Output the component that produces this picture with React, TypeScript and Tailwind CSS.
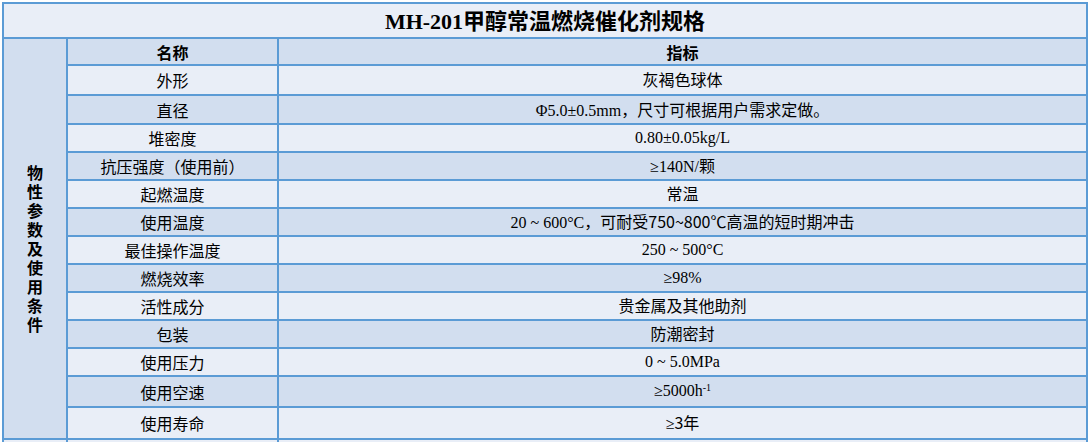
import React from "react";

const sans = "font-['Noto_Sans_CJK_SC','Noto_Sans',sans-serif]";
const serif = "font-['Liberation_Serif','Noto_Sans_CJK_SC',serif]";

type Row = { name: string; value: React.ReactNode; h: string };

const rows: Row[] = [
  { name: "外形", value: <span className={sans}>灰褐色球体</span>, h: "h-[30px]" },
  { name: "直径", value: <>Φ5.0±0.5mm<span className={sans}>，尺寸可根据用户需求定做。</span></>, h: "h-[29px]" },
  { name: "堆密度", value: "0.80±0.05kg/L", h: "h-[28px]" },
  { name: "抗压强度（使用前）", value: <>≥140N/<span className={sans}>颗</span></>, h: "h-[28px]" },
  { name: "起燃温度", value: <span className={sans}>常温</span>, h: "h-[28px]" },
  {
    name: "使用温度",
    value: (
      <>
        20 ~ 600°C<span className={sans}>，可耐受750~800℃高温的短时期冲击</span>
      </>
    ),
    h: "h-[28px]",
  },
  { name: "最佳操作温度", value: "250 ~ 500°C", h: "h-[28px]" },
  { name: "燃烧效率", value: "≥98%", h: "h-[28px]" },
  { name: "活性成分", value: <span className={sans}>贵金属及其他助剂</span>, h: "h-[28px]" },
  { name: "包装", value: <span className={sans}>防潮密封</span>, h: "h-[28px]" },
  { name: "使用压力", value: "0 ~ 5.0MPa", h: "h-[28px]" },
  {
    name: "使用空速",
    value: (
      <>
        ≥5000h<span className="relative -top-[5px] text-[10px]">-1</span>
      </>
    ),
    h: "h-[31px]",
  },
  {
    name: "使用寿命",
    value: (
      <>
        ≥<span className={sans}>3年</span>
      </>
    ),
    h: "h-[32px]",
  },
];

const cell = "border-2 border-[#5b9bd5] text-center align-middle p-0";

export default function App() {
  return (
    <div className="w-[1090px] h-[442px] overflow-hidden bg-white pl-[2px] pt-[2px]">
      <table className="w-[1086px] table-fixed border-collapse text-[16px] leading-[20px] text-black">
        <colgroup>
          <col className="w-[64px]" />
          <col className="w-[211px]" />
          <col />
        </colgroup>
        <tbody>
          <tr className="h-[35px] bg-[#e9eef7]">
            <td colSpan={3} className={`${cell} text-[22px] font-bold`}>
              <span className="font-['Liberation_Serif',serif]">MH-201</span>
              <span className={sans}>甲醇常温燃烧催化剂规格</span>
            </td>
          </tr>
          <tr className="h-[27px] bg-[#d2deef]">
            <td rowSpan={14} className={`${cell} bg-[#d2deef]`}>
              <div className={`${sans} mx-auto flex w-[16px] flex-col pt-[19px] text-[16px] font-bold leading-[19px]`}>
                {"物性参数及使用条件".split("").map((c) => (
                  <span key={c} className="h-[19px]">
                    {c}
                  </span>
                ))}
              </div>
            </td>
            <td className={`${cell} ${sans} font-bold`}>名称</td>
            <td className={`${cell} ${sans} font-bold`}>指标</td>
          </tr>
          {rows.map((r, i) => (
            <tr key={r.name} className={`${r.h} ${i % 2 === 0 ? "bg-[#e9eef7]" : "bg-[#d2deef]"}`}>
              <td className={`${cell} ${sans}`}>{r.name}</td>
              <td className={`${cell} ${serif}`}>{r.value}</td>
            </tr>
          ))}
          <tr className="h-[28px] bg-[#e9eef7]">
            <td className={cell} />
            <td className={cell} />
            <td className={cell} />
          </tr>
        </tbody>
      </table>
    </div>
  );
}
